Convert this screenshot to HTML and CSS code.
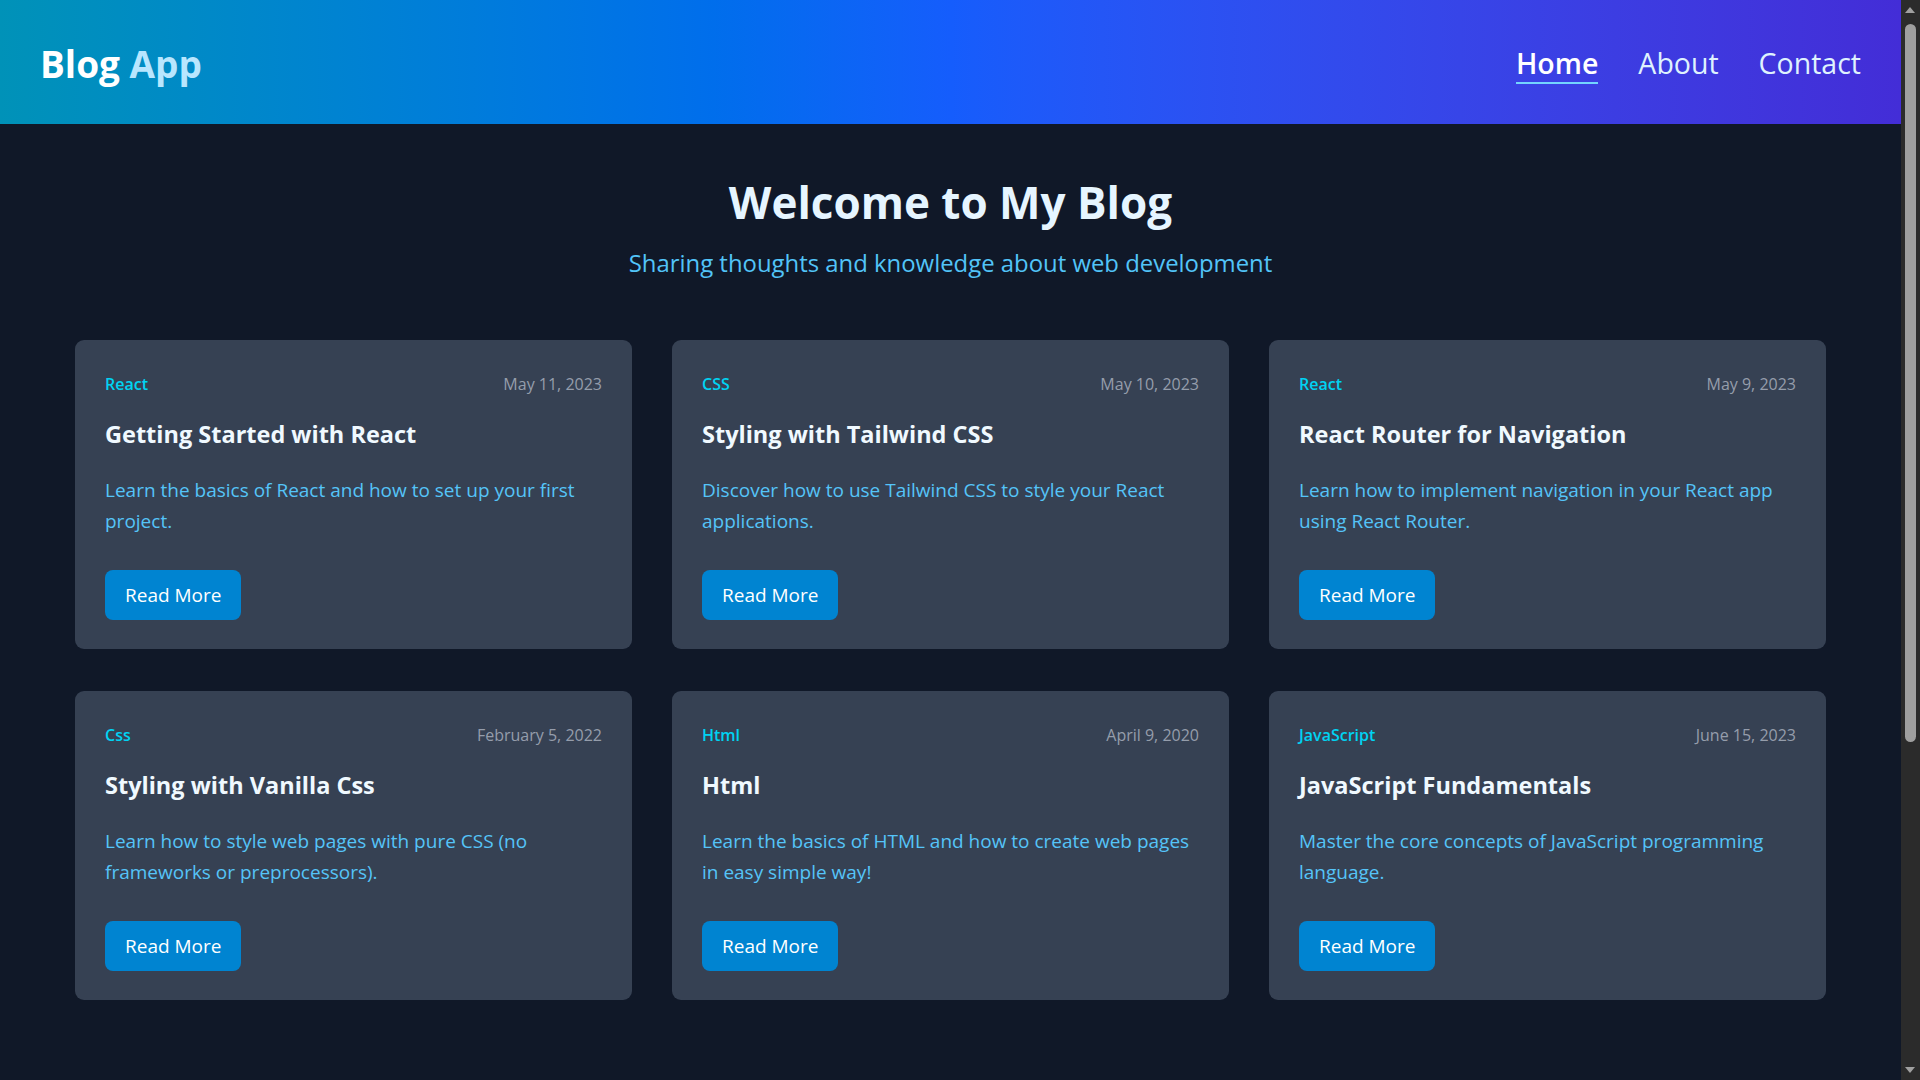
FILE: index.html
```html
<!DOCTYPE html>
<html lang="en">
<head>
<meta charset="utf-8">
<title>Blog App</title>
<link rel="stylesheet" href="styles.css">
</head>
<body>
<header class="site-header">
  <a class="logo" href="#">Blog <span class="logo-accent">App</span></a>
  <nav class="nav">
    <a class="nav-link active" href="#">Home</a>
    <a class="nav-link" href="#">About</a>
    <a class="nav-link" href="#">Contact</a>
  </nav>
</header>
<main class="main">
  <section class="hero">
    <h1 class="hero-title">Welcome to My Blog</h1>
    <p class="hero-sub">Sharing thoughts and knowledge about web development</p>
  </section>
  <section class="grid">
    <article class="card">
      <div class="meta"><span class="cat">React</span><span class="date">May 11, 2023</span></div>
      <h2 class="card-title">Getting Started with React</h2>
      <p class="card-desc">Learn the basics of React and how to set up your first project.</p>
      <a class="btn" href="#">Read More</a>
    </article>
    <article class="card">
      <div class="meta"><span class="cat">CSS</span><span class="date">May 10, 2023</span></div>
      <h2 class="card-title">Styling with Tailwind CSS</h2>
      <p class="card-desc">Discover how to use Tailwind CSS to style your React applications.</p>
      <a class="btn" href="#">Read More</a>
    </article>
    <article class="card">
      <div class="meta"><span class="cat">React</span><span class="date">May 9, 2023</span></div>
      <h2 class="card-title">React Router for Navigation</h2>
      <p class="card-desc">Learn how to implement navigation in your React app using React Router.</p>
      <a class="btn" href="#">Read More</a>
    </article>
    <article class="card">
      <div class="meta"><span class="cat">Css</span><span class="date">February 5, 2022</span></div>
      <h2 class="card-title">Styling with Vanilla Css</h2>
      <p class="card-desc">Learn how to style web pages with pure CSS (no frameworks or preprocessors).</p>
      <a class="btn" href="#">Read More</a>
    </article>
    <article class="card">
      <div class="meta"><span class="cat">Html</span><span class="date">April 9, 2020</span></div>
      <h2 class="card-title">Html</h2>
      <p class="card-desc">Learn the basics of HTML and how to create web pages in easy simple way!</p>
      <a class="btn" href="#">Read More</a>
    </article>
    <article class="card">
      <div class="meta"><span class="cat">JavaScript</span><span class="date">June 15, 2023</span></div>
      <h2 class="card-title">JavaScript Fundamentals</h2>
      <p class="card-desc">Master the core concepts of JavaScript programming language.</p>
      <a class="btn" href="#">Read More</a>
    </article>
  </section>
</main>
<div class="fake-scrollbar" aria-hidden="true">
  <span class="sb-arrow sb-up"></span>
  <span class="sb-thumb"></span>
  <span class="sb-arrow sb-down"></span>
</div>
</body>
</html>
```
FILE: styles.css
```css
* { box-sizing: border-box; }

html { background: #101828; }

body {
  margin: 0 19px 0 0;
  background: #101828;
  font-family: "Open Sans", "Noto Sans", sans-serif;
  color: #f0f9ff;
}

a { text-decoration: none; }

.site-header {
  height: 124px;
  padding: 2px 40px 0;
  display: flex;
  align-items: center;
  justify-content: space-between;
  background: linear-gradient(to right in oklab, #0092b8, #155dfc, #432dd7);
}

.logo {
  font-size: 37px;
  font-weight: 700;
  color: #ffffff;
  line-height: 1;
}
.logo-accent { color: #b8e6fe; }

.nav { display: flex; gap: 40px; align-items: center; }
.nav-link {
  font-size: 28.5px;
  color: #dff2fe;
  line-height: 38px;
  position: relative;
}
.nav-link.active { color: #ffffff; font-weight: 600; }
.nav-link.active::after {
  content: "";
  position: absolute;
  left: 0;
  right: 0;
  bottom: -2px;
  height: 2px;
  background: #74d4ff;
}

.main { padding: 0 75px 40px; }

.hero { text-align: center; padding-top: 53px; }
.hero-title {
  margin: 0;
  font-size: 44px;
  line-height: 50px;
  font-weight: 700;
  color: #e6f5ff;
}
.hero-sub {
  margin: 18px 0 0;
  font-size: 23.9px;
  line-height: 36px;
  color: #52c4f8;
}

.grid {
  margin-top: 59px;
  display: grid;
  grid-template-columns: repeat(3, 1fr);
  gap: 42px 40px;
}

.card {
  background: #364153;
  border-radius: 9px;
  padding: 31px 30px 29px;
  display: flex;
  flex-direction: column;
  align-items: flex-start;
}

.meta {
  width: 100%;
  display: flex;
  justify-content: space-between;
  align-items: center;
  height: 26px;
  font-size: 16px;
}
.cat { color: #00d3f2; font-weight: 600; }
.date { color: #959dab; }

.card-title {
  margin: 21px 0 0;
  font-size: 23.5px;
  line-height: 32px;
  font-weight: 700;
  color: #f0f9ff;
}

.card-desc {
  margin: 25px 0 0;
  font-size: 19px;
  line-height: 30.6px;
  color: #55c4f8;
  min-height: 61px;
}

.btn {
  margin-top: 34px;
  height: 50px;
  padding: 0 20px;
  display: inline-flex;
  align-items: center;
  background: #0084d1;
  color: #ffffff;
  font-size: 19px;
  border-radius: 8px;
}

.fake-scrollbar {
  position: fixed;
  top: 0;
  right: 0;
  width: 19px;
  height: 100vh;
  background: #2b2b2b;
}
.sb-thumb {
  position: absolute;
  left: 4px;
  top: 24px;
  width: 11px;
  height: 718px;
  border-radius: 6px;
  background: #9f9f9f;
}
.sb-arrow {
  position: absolute;
  left: 4px;
  width: 0;
  height: 0;
  border-left: 5.5px solid transparent;
  border-right: 5.5px solid transparent;
}
.sb-up { top: 7px; border-bottom: 6px solid #a0a0a0; }
.sb-down { bottom: 7px; border-top: 6px solid #a0a0a0; }
```
